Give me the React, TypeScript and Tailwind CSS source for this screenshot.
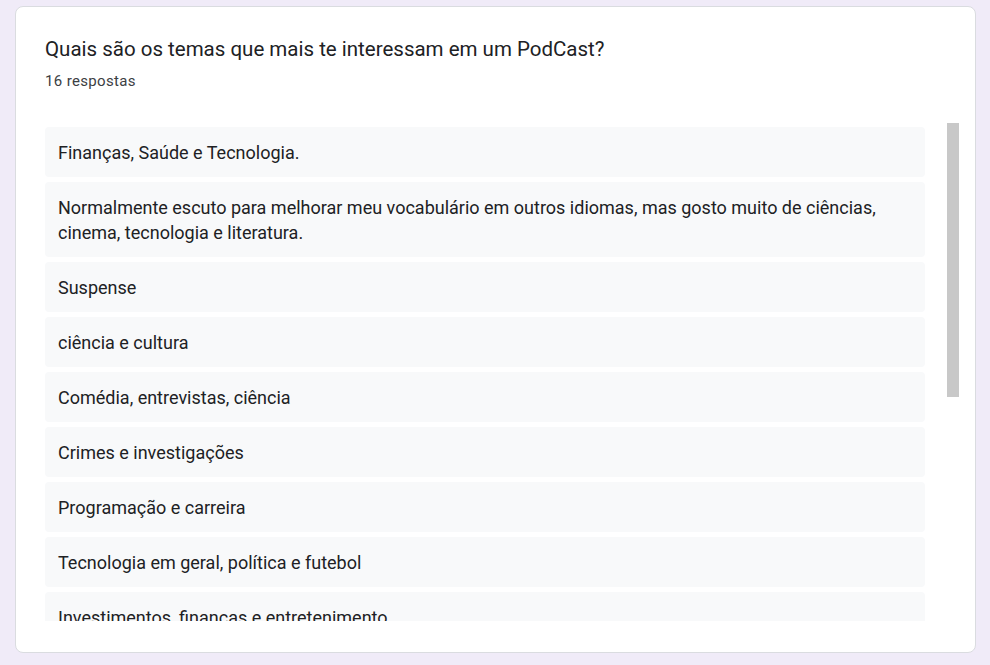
const answers = [
  "Finanças, Saúde e Tecnologia.",
  "Normalmente escuto para melhorar meu vocabulário em outros idiomas, mas gosto muito de ciências, cinema, tecnologia e literatura.",
  "Suspense",
  "ciência e cultura",
  "Comédia, entrevistas, ciência",
  "Crimes e investigações",
  "Programação e carreira",
  "Tecnologia em geral, política e futebol",
  "Investimentos, finanças e entretenimento",
];

export default function App() {
  return (
    <div
      className="w-[990px] h-[665px] bg-[#f0ebf8] pt-[6px] pl-[15px] overflow-hidden"
      style={{ fontFamily: "Roboto, 'Noto Sans', Arial, sans-serif" }}
    >
      <div className="w-[961px] h-[647px] bg-white border border-[#dadce0] rounded-[8px] pl-[29px] pr-[15px] pt-[24px] flex flex-col">
        <h1 className="text-[20.5px] leading-[36px] text-[#202124]">
          Quais são os temas que mais te interessam em um PodCast?
        </h1>
        <p className="text-[15px] leading-[20px] text-[#3c4043] mt-[4px] tracking-[0.35px]">
          16 respostas
        </p>

        <div className="mt-[31px] flex h-[499px]">
          <div className="w-[880px] h-[499px] overflow-hidden pt-[5px] flex flex-col gap-[5px]">
            {answers.map((a, i) => (
              <div
                key={i}
                className="bg-[#f8f9fa] rounded-[4px] px-[13px] pt-[13px] pb-[12px] text-[18px] leading-[25px] text-[#202124] shrink-0"
              >
                {a}
              </div>
            ))}
          </div>
          <div className="ml-[22px] w-[12px] pt-[1px]">
            <div className="h-[274px] bg-[#c8c8c8]" />
          </div>
        </div>
      </div>
    </div>
  );
}
